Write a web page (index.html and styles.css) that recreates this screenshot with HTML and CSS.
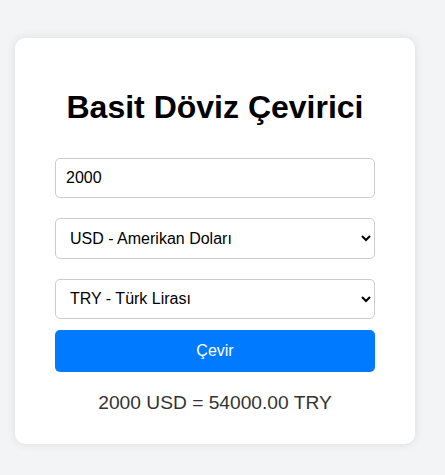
FILE: index.html
```html
<!DOCTYPE html>
<html lang="tr">
<head>
<meta charset="utf-8">
<title>Basit Döviz Çevirici</title>
<link rel="stylesheet" href="styles.css">
</head>
<body>
<div class="card">
  <h1 class="title">Basit Döviz Çevirici</h1>
  <input class="field amount" type="number" value="2000">
  <select class="field">
    <option>USD - Amerikan Doları</option>
  </select>
  <select class="field to">
    <option>TRY - Türk Lirası</option>
  </select>
  <button class="btn">Çevir</button>
  <p class="result">2000 USD = 54000.00 TRY</p>
</div>
</body>
</html>
```

FILE: styles.css
```css
html, body {
  margin: 0;
  padding: 0;
}
body {
  background: #f3f4f6;
  font-family: "Liberation Sans", Arial, sans-serif;
  padding: 38px 0 0 15px;
  min-height: 475px;
  box-sizing: border-box;
}
.card {
  width: 400px;
  box-sizing: border-box;
  background: #fff;
  border-radius: 10px;
  box-shadow: 0 0 10px rgba(0, 0, 0, 0.1);
  padding: 30px 40px 30px;
  text-align: center;
}
.title {
  font-size: 32px;
  font-weight: bold;
  margin: 21px 0 32px;
  color: #000;
}
.field {
  display: block;
  width: 100%;
  height: 40.4px;
  box-sizing: border-box;
  margin: 0 0 20px;
  padding: 0 10px;
  font-family: "Liberation Sans", Arial, sans-serif;
  font-size: 16px;
  color: #000;
  border: 1px solid #ccc;
  border-radius: 5px;
  background: #fff;
}
.field.to {
  margin-bottom: 10.5px;
}
.btn {
  display: block;
  width: 100%;
  height: 42.4px;
  box-sizing: border-box;
  border: none;
  border-radius: 5px;
  background: #007bff;
  color: #fff;
  font-family: "Liberation Sans", Arial, sans-serif;
  font-size: 16px;
}
.result {
  margin: 20px 0 0;
  font-size: 19.2px;
  color: #333;
}
```
